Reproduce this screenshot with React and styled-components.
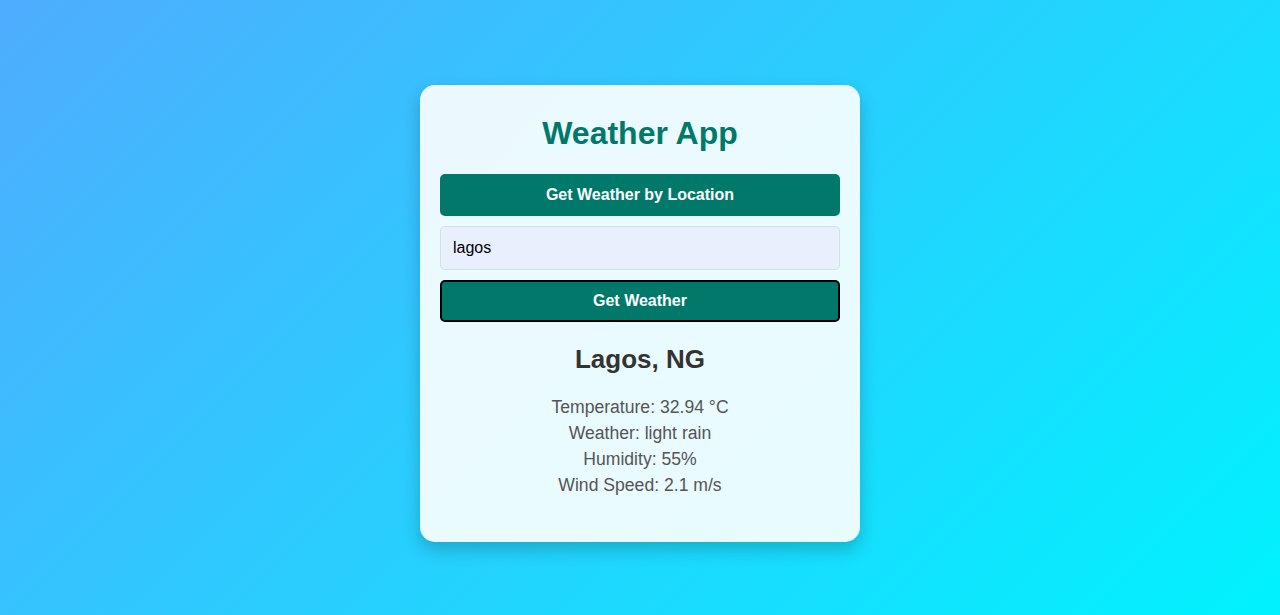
import React from "react";
import styled, { createGlobalStyle } from "styled-components";

const Global = createGlobalStyle`
  html, body { margin: 0; padding: 0; }
  body {
    font-family: "Liberation Sans", Arial, sans-serif;
  }
  * { box-sizing: border-box; }
`;

const Page = styled.div`
  width: 100%;
  min-height: 615px;
  background: linear-gradient(135deg, #4facfe 0%, #00f2fe 100%);
  display: flex;
  justify-content: center;
  align-items: flex-start;
  padding-top: 85px;
`;

const Card = styled.div`
  width: 440px;
  background: rgba(255, 255, 255, 0.9);
  border-radius: 15px;
  box-shadow: 0 8px 18px rgba(0, 0, 0, 0.2);
  padding: 20px 20px 44px;
  display: flex;
  flex-direction: column;
`;

const Title = styled.h1`
  margin: 10px 0 22px;
  font-size: 32px;
  line-height: 37px;
  font-weight: 700;
  color: #00796b;
  text-align: center;
`;

const Button = styled.button`
  height: 42px;
  width: 100%;
  border-radius: 5px;
  border: 2px solid ${(p) => (p.$focused ? "#000" : "#00796b")};
  background: #00796b;
  color: #fff;
  font-family: "Liberation Sans", Arial, sans-serif;
  font-size: 16px;
  font-weight: 700;
  cursor: pointer;
`;

const Input = styled.input`
  height: 44px;
  width: 100%;
  margin: 10px 0;
  padding: 0 12px;
  border: 1px solid #d6dde6;
  border-radius: 5px;
  background: #e8f0fe;
  color: #000;
  font-family: "Liberation Sans", Arial, sans-serif;
  font-size: 16px;
  outline: none;
`;

const City = styled.h2`
  margin: 22px 0 20px;
  font-size: 26px;
  line-height: 30px;
  font-weight: 700;
  color: #333;
  text-align: center;
`;

const Details = styled.div`
  display: flex;
  flex-direction: column;
  align-items: center;
`;

const Line = styled.p`
  margin: 0;
  font-size: 17.6px;
  line-height: 26px;
  color: #555;
`;

export default function App() {
  return (
    <>
      <Global />
      <Page>
        <Card>
          <Title>Weather App</Title>
          <Button>Get Weather by Location</Button>
          <Input defaultValue="lagos" />
          <Button $focused>Get Weather</Button>
          <City>Lagos, NG</City>
          <Details>
            <Line>Temperature: 32.94 °C</Line>
            <Line>Weather: light rain</Line>
            <Line>Humidity: 55%</Line>
            <Line>Wind Speed: 2.1 m/s</Line>
          </Details>
        </Card>
      </Page>
    </>
  );
}
